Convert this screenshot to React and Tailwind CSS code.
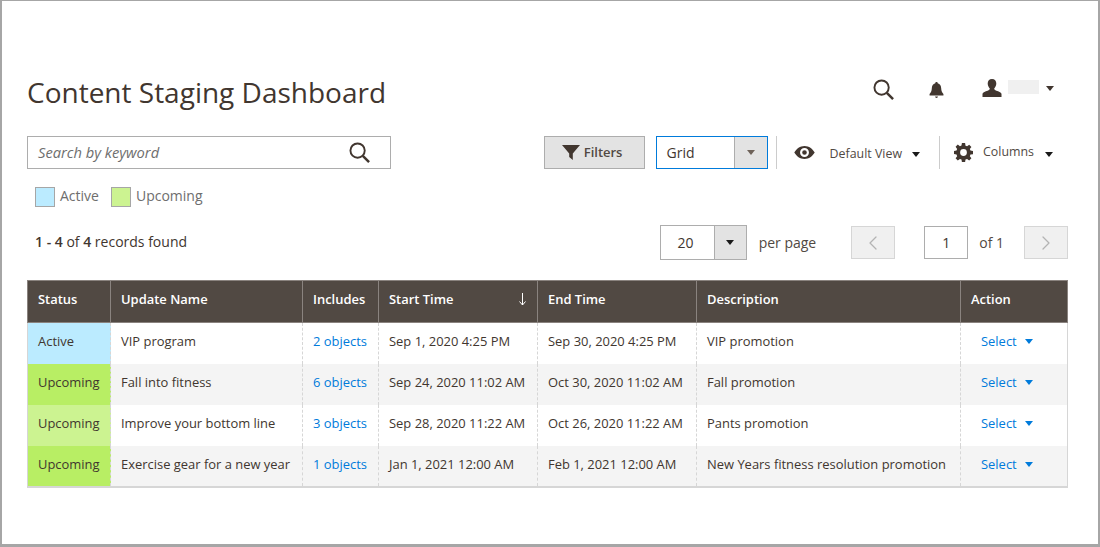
import { ChevronLeft, ChevronRight } from 'lucide-react';

const rows = [
  { status: 'Active', statusBg: 'bg-[#bbebff]', name: 'VIP program', includes: '2 objects', start: 'Sep 1, 2020 4:25 PM', end: 'Sep 30, 2020 4:25 PM', desc: 'VIP promotion' },
  { status: 'Upcoming', statusBg: 'bg-[#b8ee64]', name: 'Fall into fitness', includes: '6 objects', start: 'Sep 24, 2020 11:02 AM', end: 'Oct 30, 2020 11:02 AM', desc: 'Fall promotion' },
  { status: 'Upcoming', statusBg: 'bg-[#ccf391]', name: 'Improve your bottom line', includes: '3 objects', start: 'Sep 28, 2020 11:22 AM', end: 'Oct 26, 2020 11:22 AM', desc: 'Pants promotion' },
  { status: 'Upcoming', statusBg: 'bg-[#b8ee64]', name: 'Exercise gear for a new year', includes: '1 objects', start: 'Jan 1, 2021 12:00 AM', end: 'Feb 1, 2021 12:00 AM', desc: 'New Years fitness resolution promotion' },
];

const Caret = ({ className }) => (
  <span className={`inline-block h-0 w-0 border-x-[4px] border-t-[5px] border-x-transparent ${className}`} />
);

const SearchIcon = ({ size }) => (
  <svg width={size} height={size} viewBox="0 0 22 22" fill="none" stroke="#41362f" strokeWidth="2">
    <circle cx="9" cy="9" r="7.5" />
    <path d="M14.5 14.5 L21 21" strokeWidth="2.6" />
  </svg>
);

const Bell = () => (
  <svg width="15" height="18" viewBox="0 0 16 18" fill="#41362f">
    <path d="M8 0.5c.8 0 1.3.5 1.3 1.3 2.4.6 3.6 2.6 3.7 5.2.1 3 .8 4.4 2.4 6.2v1.600H.6v-1.600C2.200 11.400 2.900 10 3 7c.1-2.600 1.300-4.600 3.700-5.200C6.700 1 7.200.5 8 .5z" />
    <path d="M6.500 16h3c0 .9-.6 1.500-1.500 1.500S6.500 16.900 6.500 16z" />
  </svg>
);

const User = () => (
  <svg width="20" height="18" viewBox="0 0 20 18" fill="#41362f">
    <path d="M10 0c2.800 0 4.300 2 4.300 4.600 0 2-1 3.900-2.100 5 .1 1 .6 1.500 2.200 2.100 2.300.8 4.600 1.500 5.100 3V18H.5v-3.300c.5-1.500 2.800-2.200 5.100-3 1.600-.6 2.100-1.100 2.200-2.100-1.100-1.100-2.100-3-2.100-5C5.700 2 7.200 0 10 0z" />
  </svg>
);

const Funnel = () => (
  <svg width="18" height="15" viewBox="0 0 18 15" fill="#41362f">
    <path d="M0 0h18L10.800 8.500V15L7.200 12V8.500z" />
  </svg>
);

const Eye = () => (
  <svg width="23" height="13" viewBox="0 0 22 14" fill="#41362f">
    <path fillRule="evenodd" d="M11 0c4.800 0 8.600 3 11 7-2.400 4-6.200 7-11 7S2.400 11 0 7c2.400-4 6.200-7 11-7zm0 2.200a4.800 4.800 0 1 0 0 9.600 4.800 4.800 0 0 0 0-9.600zM11 4.500a2.500 2.500 0 1 1 0 5 2.500 2.500 0 0 1 0-5z" />
  </svg>
);

const Gear = () => (
  <svg width="19" height="19" viewBox="0 0 18 18" fill="#41362f">
    <path fillRule="evenodd" d="M7.500 0h3l.4 2.500 1.500.6 2-1.500 2.100 2.100-1.500 2 .6 1.500 2.400.4v3l-2.400.4-.6 1.500 1.500 2-2.100 2.100-2-1.500-1.500.6-.4 2.400h-3l-.4-2.400-1.500-.6-2 1.500-2.100-2.100 1.500-2-.6-1.500L0 10.500v-3l2.400-.4.600-1.500-1.500-2 2.100-2.100 2 1.500 1.500-.6zM9 5.800a3.200 3.200 0 1 0 0 6.400 3.200 3.200 0 0 0 0-6.400z" />
  </svg>
);

const SortArrow = () => (
  <svg width="9" height="13" viewBox="0 0 9 13" fill="none" stroke="#ffffff" strokeWidth="1">
    <path d="M4.500 0v12M1.500 8.500l3 3.500 3-3.500" />
  </svg>
);

export default function App() {
  return (
    <div className="relative h-[547px] w-[1100px] overflow-hidden border-t border-r-2 border-b-[3px] border-l-2 border-[#a6a6a6] bg-white pl-[25px] pr-[30px] font-['Open_Sans',sans-serif] text-[#41362f]">
      {/* specks on the window edge */}
      <span className="absolute top-[57px] -right-[2px] h-[7px] w-px bg-[#555555]" />
      <span className="absolute top-[131px] -right-[2px] h-[13px] w-px bg-[#555555]" />
      <span className="absolute top-[477px] -right-[2px] h-[13px] w-px bg-[#555555]" />

      {/* Title row */}
      <div className="flex h-[135px] items-start justify-between pt-[71px]">
        <h1 className="text-[28px] leading-[40px] font-normal">Content Staging Dashboard</h1>
        <div className="flex items-center pt-[7px] pr-[14px]">
          <SearchIcon size={21} />
          <span className="ml-[35px]"><Bell /></span>
          <span className="ml-[38px] -mt-[4px]"><User /></span>
          <span className="ml-[6px] -mt-[5px] h-[14px] w-[31px] bg-[#f0f0f0] blur-[0.5px]" />
          <Caret className="ml-[7px] -mt-[2px] border-t-[#41362f]" />
        </div>
      </div>

      {/* Search and toolbar row */}
      <div className="flex h-[33px] items-center justify-between">
        <div className="flex h-[33px] w-[364px] items-center justify-between border border-[#adadad] pl-[10px] pr-[20px]">
          <span className="text-[14.7px] text-[#6e6e6e] italic">Search by keyword</span>
          <SearchIcon size={21} />
        </div>
        <div className="flex items-center">
          <button className="flex h-[33px] w-[101px] items-center justify-center gap-[4px] border border-[#adadad] bg-[#e3e3e3] pr-[4px] text-[13px] font-semibold text-[#514943]">
            <Funnel /> Filters
          </button>
          <div className="ml-[11px] flex h-[33px] w-[112px] border border-[#007bdb]">
            <span className="flex-1 pl-[10px] text-[14px] leading-[31px] text-[#41362f]">Grid</span>
            <span className="flex w-[33px] items-center justify-center border-l border-[#adadad] bg-[#e3e3e3]">
              <Caret className="border-t-[#6e6259]" />
            </span>
          </div>
          <span className="ml-[8px] h-[33px] w-px bg-[#cccccc]" />
          <span className="ml-[16px]"><Eye /></span>
          <span className="ml-[14px] pt-[3px] text-[12.4px] text-[#514943]">Default View</span>
          <Caret className="ml-[10px] mt-[3px] border-t-[#1a1a1a]" />
          <span className="ml-[19px] h-[33px] w-px bg-[#cccccc]" />
          <span className="ml-[14px]"><Gear /></span>
          <span className="ml-[10px] text-[12.4px] text-[#514943]">Columns</span>
          <Caret className="ml-[11px] mr-[15px] mt-[3px] border-t-[#1a1a1a]" />
        </div>
      </div>

      {/* Legend */}
      <div className="mt-[18px] flex h-[20px] items-center pl-[8px] text-[14px] text-[#6e6e6e]">
        <span className="h-[20px] w-[20px] border border-[#a6a6a6] bg-[#bbebff]" />
        <span className="ml-[5px] -mt-[4px]">Active</span>
        <span className="ml-[12px] h-[20px] w-[20px] border border-[#a6a6a6] bg-[#ccf391]" />
        <span className="ml-[5px] -mt-[4px]">Upcoming</span>
      </div>

      {/* Records and pagination */}
      <div className="mt-[18px] flex h-[35px] items-center justify-between">
        <div className="-mt-[3px] pl-[8px] text-[14px] text-[#41362f]">
          <b className="font-semibold">1 - 4</b> of <b className="font-semibold">4</b> records found
        </div>
        <div className="flex items-center text-[14px] text-[#41362f]">
          <div className="flex h-[35px] w-[87px] border border-[#adadad]">
            <span className="w-[53px] pr-[3px] text-center leading-[33px]">20</span>
            <span className="flex flex-1 items-center justify-center border-l border-[#adadad] bg-[#e3e3e3]">
              <Caret className="border-t-[#1a1a1a]" />
            </span>
          </div>
          <span className="ml-[12px] text-[#514943]">per page</span>
          <span className="ml-[35px] flex h-[33px] w-[44px] items-center justify-center border border-[#d6d6d6] bg-[#f0f0f0]">
            <ChevronLeft size={24} strokeWidth={1.25} className="text-[#b3b3b3]" />
          </span>
          <span className="ml-[29px] flex h-[33px] w-[44px] items-center justify-center border border-[#adadad]">1</span>
          <span className="ml-[11px] text-[#514943]">of 1</span>
          <span className="ml-[20px] flex h-[33px] w-[44px] items-center justify-center border border-[#d6d6d6] bg-[#f0f0f0]">
            <ChevronRight size={24} strokeWidth={1.25} className="text-[#b3b3b3]" />
          </span>
        </div>
      </div>

      {/* Grid */}
      <table className="mt-[20px] w-[1040px] table-fixed border-collapse text-[12.95px] text-[#41362f]">
        <colgroup>
          <col className="w-[83px]" />
          <col className="w-[192px]" />
          <col className="w-[76px]" />
          <col className="w-[159px]" />
          <col className="w-[159px]" />
          <col className="w-[264px]" />
          <col className="w-[107px]" />
        </colgroup>
        <thead>
          <tr className="h-[42px] bg-[#514943] text-left text-white">
            {['Status', 'Update Name', 'Includes', 'Start Time', 'End Time', 'Description', 'Action'].map((h) => (
              <th key={h} className="border border-[#8a837f] px-[10px] pb-[4px] font-semibold">
                {h === 'Start Time' ? (
                  <span className="flex items-center justify-between">
                    {h}
                    <SortArrow />
                  </span>
                ) : h}
              </th>
            ))}
          </tr>
        </thead>
        <tbody>
          {rows.map((r, i) => {
            const pad = i === 0 ? 'pb-[4px]' : 'pb-[2px]';
            return (
              <tr key={r.name} className={`h-[41px] ${i % 2 === 1 ? 'bg-[#f4f4f4]' : 'bg-white'}`}>
                <td className={`border-l border-[#d6d6d6] px-[10px] ${pad} ${r.statusBg}`}>{r.status}</td>
                <td className={`border-l border-dashed border-[#d6d6d6] px-[10px] ${pad} whitespace-nowrap`}>{r.name}</td>
                <td className={`border-l border-dashed border-[#d6d6d6] px-[10px] ${pad} whitespace-nowrap text-[#007bdb]`}>{r.includes}</td>
                <td className={`border-l border-dashed border-[#d6d6d6] px-[10px] ${pad} whitespace-nowrap`}>{r.start}</td>
                <td className={`border-l border-dashed border-[#d6d6d6] px-[10px] ${pad} whitespace-nowrap`}>{r.end}</td>
                <td className={`border-l border-dashed border-[#d6d6d6] px-[10px] ${pad} whitespace-nowrap`}>{r.desc}</td>
                <td className={`border-r border-l border-dashed border-[#d6d6d6] [border-right-style:solid] pl-[20px] ${pad} whitespace-nowrap text-[#007bdb]`}>
                  Select
                  <Caret className="ml-[8px] mb-[2px] border-t-[#007bdb]" />
                </td>
              </tr>
            );
          })}
        </tbody>
        <tfoot>
          <tr>
            <td colSpan={7} className="h-0 border-t-2 border-[#d6d6d6] p-0" />
          </tr>
        </tfoot>
      </table>
    </div>
  );
}
